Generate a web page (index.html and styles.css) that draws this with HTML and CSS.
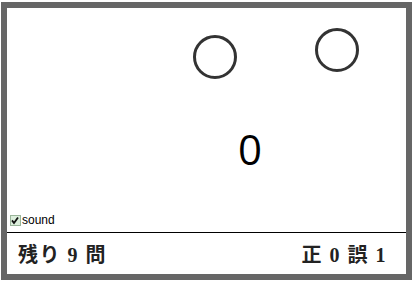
FILE: index.html
```html
<!DOCTYPE html>
<html>
<head>
<meta charset="utf-8">
<link rel="stylesheet" href="styles.css">
</head>
<body>
<div class="frame">
  <div class="stage">
    <div class="ring ring-a"></div>
    <div class="ring ring-b"></div>
    <div class="count">0</div>
    <label class="sound">
      <span class="box"><svg width="11" height="11" viewBox="0 0 11 11"><path d="M2.2 5.4 L4.4 8.2 L8.8 2.2" fill="none" stroke="#111" stroke-width="2"/></svg></span>
      <span class="sound-text">sound</span>
    </label>
  </div>
  <div class="bar">
    <span class="left">残り 9 問</span>
    <span class="right">正 0 誤 1</span>
  </div>
</div>
</body>
</html>
```
FILE: styles.css
```css
html, body {
  margin: 0;
  padding: 0;
  background: #fff;
}
body {
  padding: 2px 1px 0 1px;
}
.frame {
  width: 399px;
  height: 266px;
  border: 6px solid #666;
  background: #fff;
  display: flex;
  flex-direction: column;
}
.stage {
  position: relative;
  height: 224px;
  border-bottom: 1px solid #000;
  flex: none;
}
.ring {
  position: absolute;
  width: 38px;
  height: 38px;
  border: 3px solid #333;
  border-radius: 50%;
}
.ring-a { left: 186px; top: 27px; }
.ring-b { left: 308px; top: 20px; }
.count {
  position: absolute;
  left: 231px;
  top: 116px;
  font-family: "Open Sans", "Noto Sans", sans-serif;
  font-size: 42px;
  line-height: 50px;
  color: #000;
}
.sound {
  position: absolute;
  left: 3px;
  top: 206px;
  display: flex;
  align-items: center;
  gap: 1px;
}
.box {
  width: 11px;
  height: 11px;
  border: 1px solid #9ab59a;
  background: #dceedc;
  display: flex;
  box-sizing: border-box;
}
.box svg {
  margin: -1px 0 0 -1px;
}
.sound-text {
  font-family: "Liberation Sans", Arial, sans-serif;
  font-size: 12px;
  color: #000;
  line-height: 12px;
}
.bar {
  flex: 1;
  display: flex;
  justify-content: space-between;
  align-items: center;
  padding: 0 19px 0 11px;
  font-family: "Liberation Serif", "Noto Sans CJK JP", serif;
  font-size: 20px;
  font-weight: bold;
  letter-spacing: 1.5px;
  color: #222;
}
```
